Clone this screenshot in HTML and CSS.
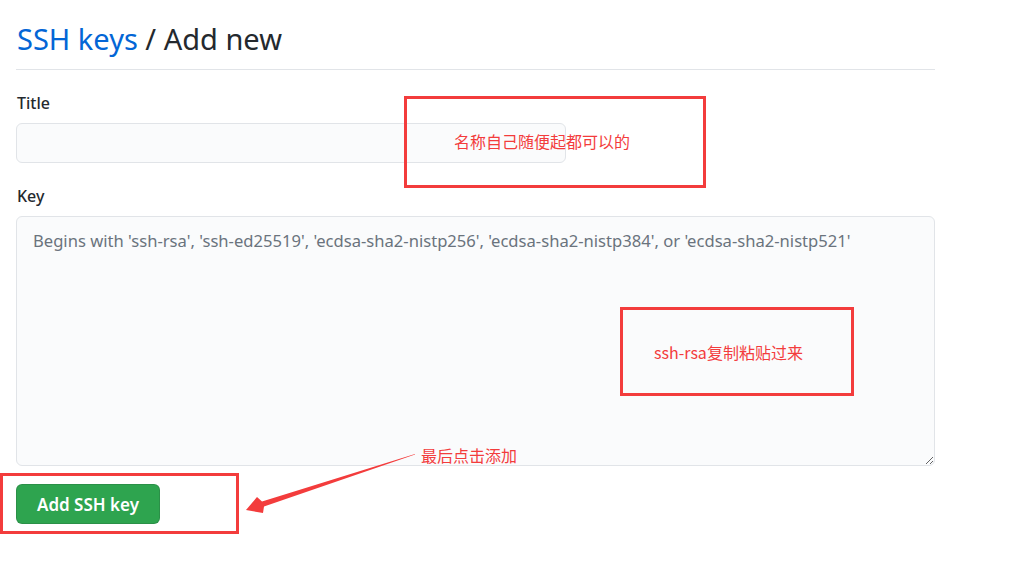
FILE: index.html
```html
<!DOCTYPE html>
<html lang="zh-CN">
<head>
<meta charset="utf-8">
<title>SSH keys / Add new</title>
<link rel="stylesheet" href="styles.css">
</head>
<body>
<div class="page">
  <h1 class="subhead"><a class="crumb" href="#">SSH keys</a> / Add new</h1>
  <form class="form">
    <div class="field field-title">
      <label class="label" for="t">Title</label>
      <input class="input" id="t" type="text">
    </div>
    <div class="field field-key">
      <label class="label" for="k">Key</label>
      <textarea class="textarea" id="k" placeholder="Begins with 'ssh-rsa', 'ssh-ed25519', 'ecdsa-sha2-nistp256', 'ecdsa-sha2-nistp384', or 'ecdsa-sha2-nistp521'"></textarea>
    </div>
    <button class="btn" type="button">Add SSH key</button>
  </form>

  <div class="note note-title"><span>名称自己随便起都可以的</span></div>
  <div class="note note-key"><span>ssh-rsa复制粘贴过来</span></div>
  <div class="note note-btn"></div>
  <div class="hint">最后点击添加</div>
  <svg class="arrow" width="180" height="70" viewBox="0 0 180 70">
    <polygon points="175,4 22,51.5 17,47 6,60 23,63 24,56.5 175,4.6" fill="#f33c3c"/>
  </svg>
</div>
</body>
</html>
```
FILE: styles.css
```css
html, body {
  margin: 0;
  padding: 0;
  background: #ffffff;
}
body {
  font-family: "Noto Sans", "Noto Sans CJK SC", sans-serif;
  color: #24292e;
}
.page {
  position: relative;
  width: 919px;
  padding: 0 0 0 16px;
  min-height: 562px;
}
.subhead {
  margin: 0;
  padding: 19px 0 10px 1px;
  font-weight: 400;
  font-size: 29px;
  line-height: 40px;
  border-bottom: 1px solid #e1e4e8;
  color: #24292e;
}
.crumb {
  color: #0366d6;
  text-decoration: none;
}
.form {
  display: flex;
  flex-direction: column;
  align-items: flex-start;
  padding-top: 23px;
}
.field {
  display: flex;
  flex-direction: column;
  align-items: flex-start;
  width: 100%;
}
.field-title {
  margin-bottom: 23px;
}
.field-key {
  margin-bottom: 18px;
}
.label {
  font-size: 16px;
  font-weight: 500;
  line-height: 20px;
  padding-left: 1px;
  margin-bottom: 10px;
}
.input {
  box-sizing: border-box;
  width: 550px;
  height: 40px;
  background: #fafbfc;
  border: 1px solid #e1e4e8;
  border-radius: 6px;
  margin: 0;
}
.textarea {
  box-sizing: border-box;
  width: 919px;
  height: 250px;
  background: #fafbfc;
  border: 1px solid #e1e4e8;
  border-radius: 6px;
  margin: 0;
  padding: 12px 16px;
  font-family: "Noto Sans", sans-serif;
  font-size: 16.6px;
  line-height: 24px;
  resize: vertical;
}
.textarea::placeholder {
  color: #6a737d;
}
.btn {
  box-sizing: border-box;
  width: 144px;
  height: 40px;
  margin-top: 0;
  background: #2ea44f;
  border: 1px solid rgba(27,31,35,0.15);
  border-radius: 6px;
  color: #ffffff;
  font-family: "Noto Sans", sans-serif;
  font-weight: 600;
  font-size: 17px;
}
.note {
  position: absolute;
  box-sizing: border-box;
  border: 3px solid #f33c3c;
  display: flex;
  align-items: center;
  color: #f33c3c;
  font-family: "Noto Sans CJK SC", sans-serif;
  font-size: 16px;
}
.note-title {
  left: 404px;
  top: 96px;
  width: 302px;
  height: 92px;
  padding-left: 47px;
  padding-bottom: 3px;
}
.note-key {
  left: 620px;
  top: 307px;
  width: 234px;
  height: 89px;
  padding-left: 31px;
}
.note-btn {
  left: 0;
  top: 473px;
  width: 239px;
  height: 61px;
}
.hint {
  position: absolute;
  left: 421px;
  top: 445px;
  color: #f33c3c;
  font-family: "Noto Sans CJK SC", sans-serif;
  font-size: 16px;
  line-height: 20px;
}
.arrow {
  position: absolute;
  left: 240px;
  top: 450px;
}
```
